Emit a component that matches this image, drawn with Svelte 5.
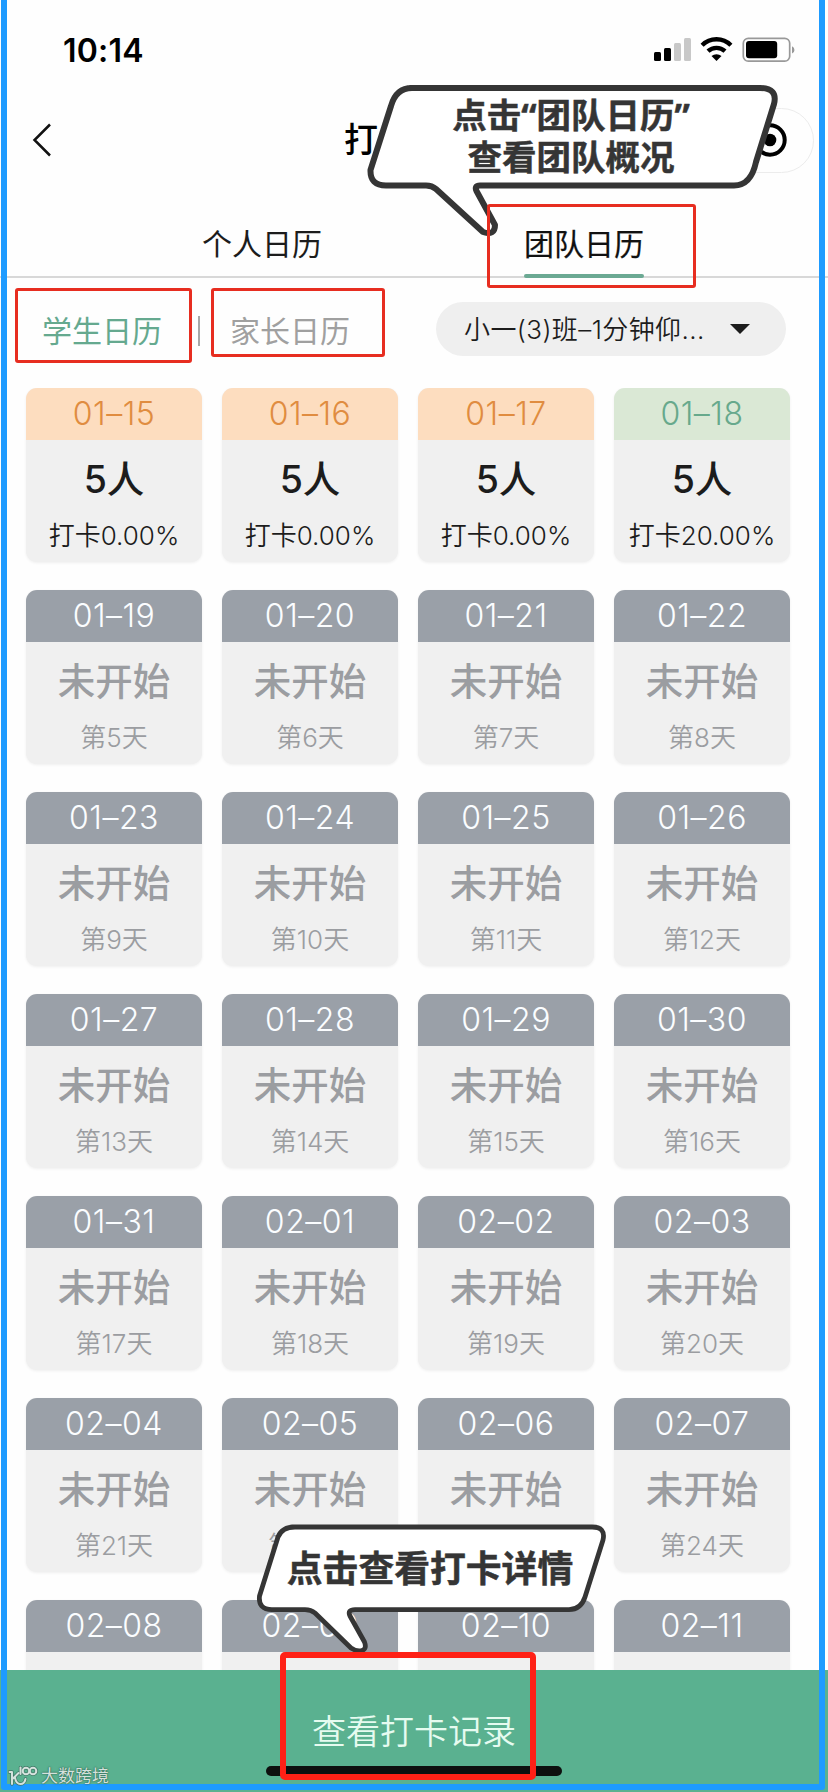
<script lang="ts">
    interface Day {
        date: string;
        title: string;
        note: string;
        state: 'missed' | 'today' | 'pending';
    }

    const TOTAL_DAYS = 28;

    // The last row only peeks out above the footer
    const FULL_CARDS = 24;

    const started: Day[] = [
        { date: '01–15', title: '5人', note: '打卡0.00%', state: 'missed' },
        { date: '01–16', title: '5人', note: '打卡0.00%', state: 'missed' },
        { date: '01–17', title: '5人', note: '打卡0.00%', state: 'missed' },
        { date: '01–18', title: '5人', note: '打卡20.00%', state: 'today' }
    ];

    function pad(n: number) {
        return String(n).padStart(2, '0');
    }

    // Days after the current one have no data yet
    function pendingDay(index: number): Day {
        const d = new Date(2021, 0, 15 + index);
        return {
            date: `${pad(d.getMonth() + 1)}–${pad(d.getDate())}`,
            title: '未开始',
            note: `第${index + 1}天`,
            state: 'pending'
        };
    }

    const days: Day[] = [
        ...started,
        ...Array.from({ length: TOTAL_DAYS - started.length }, (_, i) => pendingDay(i + started.length))
    ];

    let tab = $state('团队日历');
    let role = $state('学生日历');
</script>

<div class="screen">
    <div class="status-bar">
        <span class="time">10:14</span>
        <svg class="status-icons" width="144" height="28" viewBox="0 0 144 28">
            <rect x="2" y="16" width="7" height="9" rx="1.5" />
            <rect x="12" y="12" width="7" height="13" rx="1.5" />
            <rect x="22" y="7" width="7" height="18" rx="1.5" fill="#c8c8c8" />
            <rect x="32" y="2" width="7" height="23" rx="1.5" fill="#c8c8c8" />
            <g fill="none" stroke="#000" stroke-width="4.4">
                <path d="M50.100 9.200a20.300 20.300 0 0 1 28.800 0" />
                <path d="M56 15.200a12.600 12.600 0 0 1 17 0" />
            </g>
            <path d="M64.500 25l-5-4.900a7.400 7.400 0 0 1 10 0z" />
            <rect x="91.300" y="2.300" width="46.400" height="22.900" rx="5" fill="#fff" stroke="#999" stroke-width="1.700" />
            <rect x="94" y="5" width="31.200" height="17.300" rx="3" />
            <path d="M140 10.200a4 4 0 0 1 0 7.400z" fill="#999" />
        </svg>
    </div>

    <header class="nav">
        <svg class="back" width="20" height="36" viewBox="0 0 20 36">
            <path d="M18 2.500L2.500 18L18 33.500" fill="none" stroke="#111" stroke-width="2.500" />
        </svg>
        <h1>打</h1>
        <div class="capsule">
            <svg width="34" height="34" viewBox="0 0 34 34">
                <circle cx="17" cy="17" r="14.700" fill="none" stroke="#000" stroke-width="4" />
                <circle cx="17" cy="17" r="6.300" />
            </svg>
        </div>
    </header>

    <nav class="tabs">
        {#each ['个人日历', '团队日历'] as name}
            <button class="tab" class:active={tab === name} onclick={() => (tab = name)}>{name}</button>
        {/each}
    </nav>

    <div class="filters">
        <button class="role" class:active={role === '学生日历'} onclick={() => (role = '学生日历')}>学生日历</button>
        <span class="divider"></span>
        <button class="role" class:active={role === '家长日历'} onclick={() => (role = '家长日历')}>家长日历</button>
        <div class="picker">
            <span class="picker-text">小一(3)班–1分钟仰...</span>
            <svg width="20" height="10" viewBox="0 0 20 10"><path d="M0 0h20L10 10z" fill="#1c1c1c" /></svg>
        </div>
    </div>

    <main class="grid">
        {#each days as day, i}
            <div class="card {day.state}">
                <div class="date">{day.date}</div>
                {#if i < FULL_CARDS}
                    <div class="title">{day.title}</div>
                    <div class="note">{day.note}</div>
                {/if}
            </div>
        {/each}
    </main>

    <footer class="footer">
        <button class="records">查看打卡记录</button>
        <div class="home-indicator"></div>
    </footer>

    <div class="frame"></div>

    <!-- Guide bubbles -->
    <svg class="bubble bubble-top" width="414" height="154" viewBox="0 0 414 154">
        <path
            d="M46 6H396Q414 6 410 22L392 80Q387 103.500 370 103.500H116Q110 103.500 112.500 109L131 143Q131 154 119 150L72 107Q68 103.500 62 103.500H22Q6 103.500 6.500 88L27 24Q32 6 48 6Z"
            fill="#fff" stroke="#353535" stroke-width="6" stroke-linejoin="round" />
    </svg>
    <div class="bubble-text bubble-top-text">点击<span class="quote">“</span>团队日历<span class="quote">”</span><br />查看团队概况</div>

    <svg class="bubble bubble-bottom" width="352" height="136" viewBox="0 0 352 136">
        <path
            d="M38 7H338Q352 7 349 20L331 77Q327 89.600 315 89.600H101Q93 89.600 96 96L110.500 122Q113 129 108 130.500Q103 132 97 128L61 93Q57 89.600 51 89.600H18Q4 89.600 5.500 76L24 17Q28 7 41 7Z"
            fill="#fff" stroke="#353535" stroke-width="4.800" stroke-linejoin="round" />
    </svg>
    <div class="bubble-text bubble-bottom-text">点击查看打卡详情</div>

    <!-- Highlight boxes -->
    <div class="mark mark-student"></div>
    <div class="mark mark-parent"></div>
    <div class="mark mark-team"></div>
    <div class="mark mark-records"></div>

    <div class="watermark">
        <svg width="30" height="20" viewBox="0 0 30 20" fill="none" stroke-linecap="round">
            {#each ['#3f7564', '#d5e2dd'] as color, i}
                <g stroke={color} stroke-width={i === 0 ? 3.4 : 2}>
                    <path d="M4 6V18M1.500 6H4M10.500 7L5 12.500M7 11.500q1 6.500 5.500 6.500q4 0 5-5" />
                    <path d="M12.500 1.500V8" />
                    <circle cx="18" cy="5" r="3.300" />
                    <circle cx="25" cy="5" r="3.300" />
                </g>
            {/each}
        </svg>
        <span>大数跨境</span>
    </div>
</div>

<style>
    :global(body) {
        margin: 0;
        background: #fefefe;
    }

    .screen {
        position: relative;
        display: flex;
        flex-direction: column;
        width: 828px;
        height: 1792px;
        overflow: hidden;
        background: #fefefe;
        color: #1c1c1c;
        font-family: Inter, 'Noto Sans CJK SC', sans-serif;
    }

    button {
        border: none;
        padding: 0;
        background: none;
        color: inherit;
        font: inherit;
        cursor: pointer;
    }

    .status-bar {
        display: flex;
        justify-content: space-between;
        box-sizing: border-box;
        height: 100px;
        padding: 36px 32px 0 63px;
    }

    .time {
        height: 28px;
        line-height: 29px;
        font-size: 32px;
        font-weight: 600;
        letter-spacing: 0.2px;
        color: #000;
    }

    .nav {
        display: flex;
        align-items: center;
        box-sizing: border-box;
        height: 80px;
        padding: 0 14px 0 32px;
    }

    h1 {
        margin: 0 0 0 292px;
        font-size: 34px;
        font-weight: 500;
        line-height: 40px;
        color: #000;
    }

    .capsule {
        display: flex;
        align-items: center;
        justify-content: flex-end;
        box-sizing: border-box;
        width: 174px;
        height: 65px;
        margin-left: auto;
        padding-right: 26px;
        border: 1px solid #ececec;
        border-radius: 33px;
    }

    .tabs {
        display: flex;
        justify-content: center;
        gap: 202px;
        box-sizing: border-box;
        height: 98px;
        padding: 0 0 0 18px;
        border-bottom: 2px solid #d8d8d8;
    }

    .tab {
        position: relative;
        display: flex;
        align-items: center;
        width: 120px;
        height: 98px;
        padding-top: 29px;
        font-size: 30px;
        line-height: 66px;
        white-space: nowrap;
    }

    .tab.active {
        color: #111;
        -webkit-text-stroke: 0.2px #111;
    }

    .tab.active::after {
        content: '';
        position: absolute;
        left: 0;
        bottom: 0;
        width: 120px;
        height: 4px;
        border-radius: 2px;
        background: #6ba993;
    }

    .filters {
        display: flex;
        align-items: center;
        flex: none;
        box-sizing: border-box;
        height: 110px;
        padding: 0 0 8px 42px;
    }

    .role {
        width: 120px;
        height: 40px;
        margin-top: 4px;
        font-size: 30px;
        line-height: 40px;
        white-space: nowrap;
        color: #a0a0a0;
    }

    .role.active {
        color: #65a98f;
    }

    .divider {
        width: 2px;
        height: 30px;
        margin: 4px 30px 0 36px;
        background: #a8a8a8;
    }

    .picker {
        display: flex;
        align-items: center;
        justify-content: space-between;
        box-sizing: border-box;
        width: 350px;
        height: 54px;
        margin-left: 86px;
        padding: 0 36px 0 28px;
        border-radius: 27px;
        background: #efefef;
        font-size: 26px;
        white-space: nowrap;
    }

    .picker-text {
        padding-bottom: 3px;
        font-weight: 350;
        letter-spacing: 0.4px;
    }

    .grid {
        display: grid;
        grid-template-columns: repeat(4, 176px);
        grid-auto-rows: 174px;
        gap: 28px 20px;
        flex: none;
        height: 1282px;
        padding-left: 26px;
        overflow: hidden;
    }

    .card {
        overflow: hidden;
        border-radius: 11px;
        background: #f0f0f0;
        text-align: center;
        white-space: nowrap;
        box-shadow: 0 1px 3px #00000010;
    }

    .date {
        height: 52px;
        font-size: 32px;
        font-weight: 300;
        line-height: 51px;
        letter-spacing: 0.5px;
    }

    .missed .date {
        background: #fdddbf;
        color: #e08c40;
    }

    .today .date {
        background: #dae8d5;
        color: #67a98c;
    }

    .pending .date {
        background: #9aa0a8;
        color: #fbfdff;
    }

    .title {
        height: 78px;
        font-size: 37.500px;
        font-weight: 500;
        line-height: 80px;
    }

    .note {
        font-size: 26px;
        font-weight: 350;
        line-height: 35px;
    }

    .pending .title,
    .pending .note {
        color: #9b9da1;
    }

    .footer {
        display: flex;
        flex-direction: column;
        align-items: center;
        flex: none;
        height: 122px;
        background: #5ab190;
    }

    .records {
        height: 48px;
        margin-top: 38px;
        font-size: 34px;
        font-weight: 350;
        line-height: 48px;
        color: #e6fbf0;
    }

    .home-indicator {
        width: 296px;
        height: 10px;
        margin-top: 10px;
        border-radius: 5px;
        background: #0d100f;
    }

    .frame {
        position: absolute;
        inset: -10px 3px 2px 1px;
        border: 6px solid #1e9bff;
        border-radius: 3px;
    }

    .bubble {
        position: absolute;
    }

    .bubble-top {
        left: 364px;
        top: 82px;
    }

    .bubble-bottom {
        left: 254px;
        top: 1520px;
    }

    .bubble-text {
        position: absolute;
        text-align: center;
        white-space: nowrap;
        font-family: 'Noto Sans CJK SC', sans-serif;
        font-weight: 700;
        color: #353535;
        -webkit-text-stroke: 0.5px #353535;
    }

    .bubble-top-text {
        left: 431px;
        top: 92px;
        width: 280px;
        font-size: 34.500px;
        line-height: 42px;
    }

    .quote {
        font-family: 'Noto Sans', sans-serif;
        line-height: 1;
    }

    .bubble-bottom-text {
        left: 280px;
        top: 1541px;
        width: 300px;
        font-size: 35.800px;
        line-height: 50px;
    }

    .mark {
        position: absolute;
        box-sizing: border-box;
        border: 3px solid #e72d20;
        border-radius: 3px;
    }

    .mark-student {
        left: 15px;
        top: 288px;
        width: 177px;
        height: 75px;
    }

    .mark-parent {
        left: 211px;
        top: 288px;
        width: 174px;
        height: 69px;
    }

    .mark-team {
        left: 487px;
        top: 204px;
        width: 209px;
        height: 84px;
    }

    .mark-records {
        left: 280px;
        top: 1652px;
        width: 256px;
        height: 128px;
        border: 6px solid #ff2116;
        border-radius: 5px;
    }

    .watermark {
        position: absolute;
        left: 8px;
        top: 1765px;
        display: flex;
        align-items: center;
        gap: 3px;
        height: 22px;
        font-size: 17px;
        line-height: 22px;
        color: #d5e2dd;
        text-shadow: 0 0 2px #2f5f50, 0 0 1px #2f5f50;
    }
</style>
